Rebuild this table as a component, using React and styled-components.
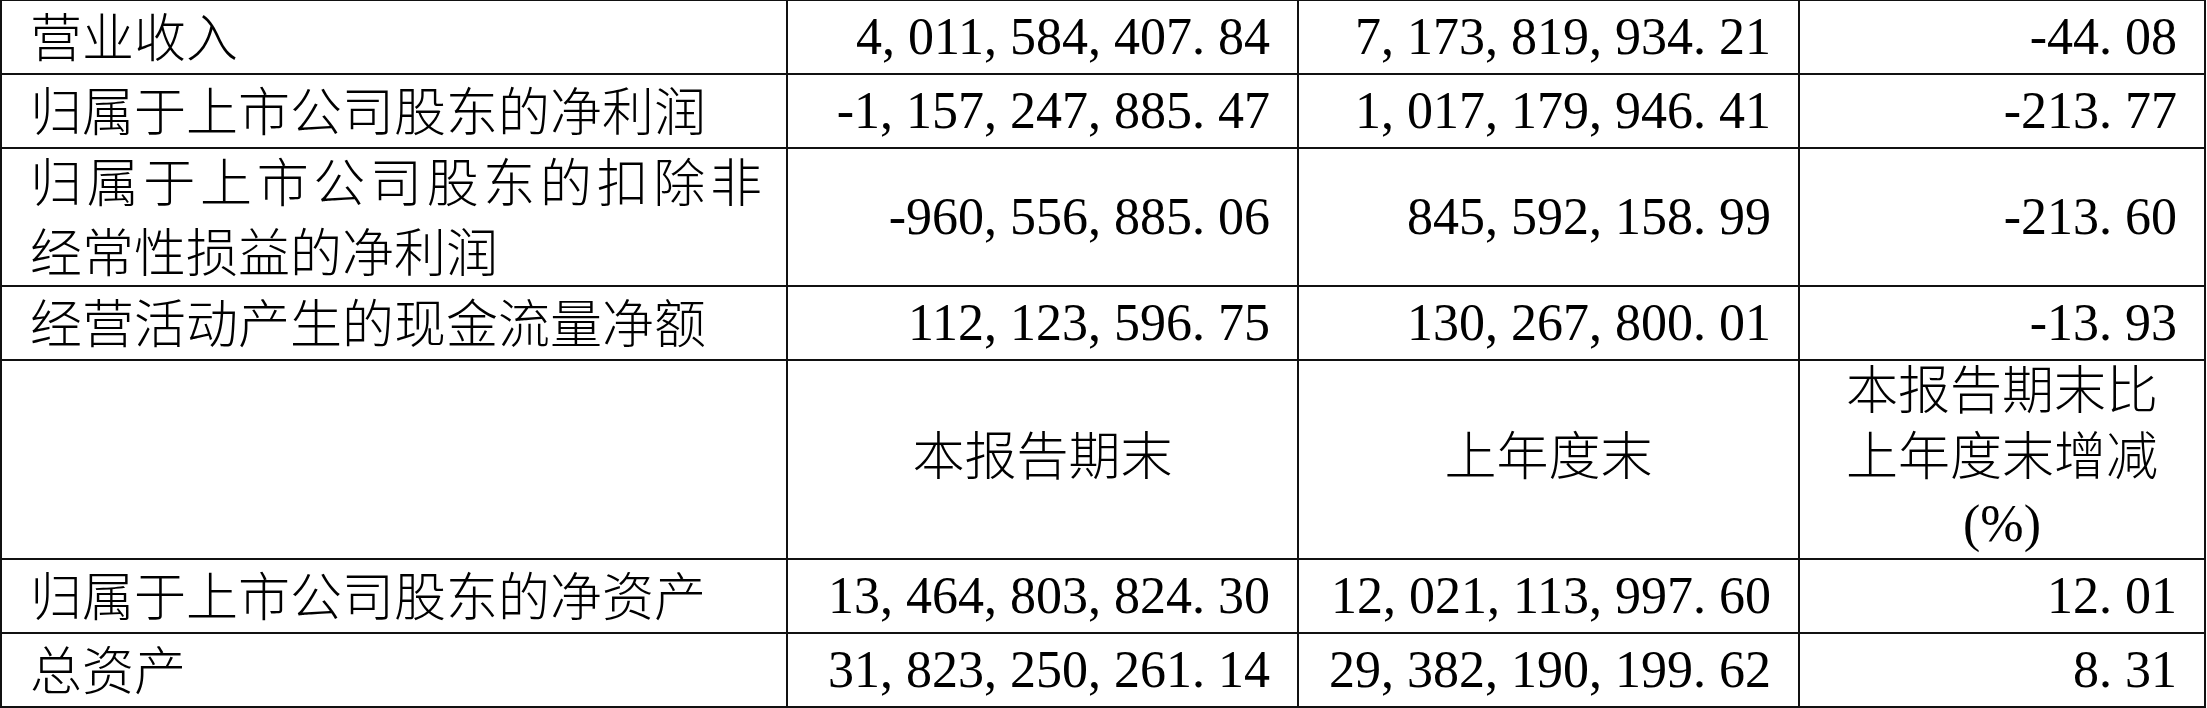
import React from 'react';
import styled, { createGlobalStyle } from 'styled-components';

const GlobalStyle = createGlobalStyle`
  html, body {
    margin: 0;
    padding: 0;
    background: #fff;
  }
  body {
    color: #000;
    font-family: "Liberation Serif", "Noto Sans CJK SC", serif;
  }
`;

const Sheet = styled.div`
  display: grid;
  grid-template-columns: 784px 509px 499px 404px;
  grid-template-rows: 72px 72px 136px 72px 197px 72px 72px;
  gap: 2px;
  padding: 1px 2px 2px 2px;
  width: max-content;
  background: #111;
  font-size: 52px;
`;

const Label = styled.div`
  background: #fff;
  display: flex;
  flex-direction: column;
  justify-content: center;
  padding: 0 24px 4px 28px;
  font-family: "Noto Sans CJK SC", sans-serif;
  font-weight: 300;
  line-height: 70px;
  white-space: nowrap;
`;

const SpreadLine = styled.span`
  display: block;
  text-align: justify;
  text-align-last: justify;
`;

const Amount = styled.div`
  background: #fff;
  display: flex;
  align-items: center;
  justify-content: flex-end;
  padding: 0 27px 0 0;
  font-family: "Liberation Serif", serif;
  line-height: 1;
  white-space: nowrap;
`;

const Mark = styled.span`
  display: inline-block;
  width: 0.5em;
  text-align: ${(p) => (p.$right ? 'right' : 'left')};
`;

const Heading = styled.div`
  background: #fff;
  display: flex;
  align-items: center;
  justify-content: center;
  text-align: center;
  padding-bottom: 4px;
  font-family: "Liberation Serif", "Noto Sans CJK SC", serif;
  font-weight: 300;
  line-height: 66px;
`;

const Blank = styled.div`
  background: #fff;
`;

// SimSun-style figures: every sign takes half an em
const Figure = ({ children }) => (
  <span>
    {children.split('').map((ch, i) => {
      if (ch === '-') return <Mark key={i} $right>-</Mark>;
      if (ch === ',' || ch === '.') return <Mark key={i}>{ch}</Mark>;
      return ch;
    })}
  </span>
);

const before = [
  ['营业收入', '4,011,584,407.84', '7,173,819,934.21', '-44.08'],
  ['归属于上市公司股东的净利润', '-1,157,247,885.47', '1,017,179,946.41', '-213.77'],
  [['归属于上市公司股东的扣除非', '经常性损益的净利润'], '-960,556,885.06', '845,592,158.99', '-213.60'],
  ['经营活动产生的现金流量净额', '112,123,596.75', '130,267,800.01', '-13.93'],
];

const after = [
  ['归属于上市公司股东的净资产', '13,464,803,824.30', '12,021,113,997.60', '12.01'],
  ['总资产', '31,823,250,261.14', '29,382,190,199.62', '8.31'],
];

const Row = ({ label, values }) => (
  <>
    <Label>
      {Array.isArray(label) ? (
        <>
          <SpreadLine>{label[0]}</SpreadLine>
          <span>{label[1]}</span>
        </>
      ) : label}
    </Label>
    {values.map((v) => (
      <Amount key={v}>
        <Figure>{v}</Figure>
      </Amount>
    ))}
  </>
);

export default function App() {
  return (
    <>
      <GlobalStyle />
      <Sheet>
        {before.map(([label, ...values]) => (
          <Row key={values[0]} label={label} values={values} />
        ))}
        <Blank />
        <Heading>本报告期末</Heading>
        <Heading>上年度末</Heading>
        <Heading>
          本报告期末比
          <br />
          上年度末增减
          <br />
          (%)
        </Heading>
        {after.map(([label, ...values]) => (
          <Row key={values[0]} label={label} values={values} />
        ))}
      </Sheet>
    </>
  );
}
